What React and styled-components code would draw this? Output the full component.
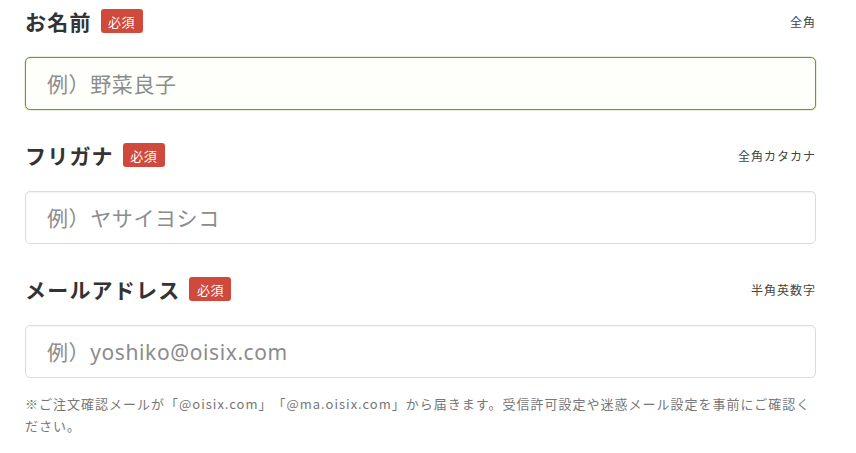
import React from "react";
import styled, { createGlobalStyle } from "styled-components";

const Global = createGlobalStyle`
  html, body { margin: 0; padding: 0; background: #fff; }
  body { font-family: "Noto Sans", "Noto Sans CJK JP", sans-serif; color: #333; }
  * { box-sizing: border-box; }
`;

const Form = styled.div`
  width: 856px;
  padding: 9px 40px 0 25px;
`;

const Field = styled.div`
  margin-bottom: 33px;
`;

const Header = styled.div`
  display: flex;
  align-items: center;
  height: 24px;
  margin-bottom: 24px;
`;

const Label = styled.span`
  font-family: "Noto Sans CJK JP", sans-serif;
  font-size: 21px;
  font-weight: 700;
  letter-spacing: 1.2px;
  color: #333;
  line-height: 24px;
`;

const Badge = styled.span`
  display: inline-flex;
  align-items: center;
  justify-content: center;
  height: 24px;
  width: 42px;
  margin-left: 9px;
  border-radius: 3px;
  background: #cf4a3d;
  color: #fff;
  font-family: "Noto Sans CJK JP", sans-serif;
  font-size: 13px;
  letter-spacing: 0.5px;
`;

const Hint = styled.span`
  margin-left: auto;
  font-family: "Noto Sans CJK JP", sans-serif;
  font-size: 12px;
  letter-spacing: 1px;
  color: #444;
`;

const Input = styled.input`
  display: block;
  width: 100%;
  height: 53px;
  padding: 0 21px;
  border: 1px solid ${(p) => (p.$active ? "#5fa318" : "#dcdcdc")};
  border-radius: 5px;
  background: ${(p) => (p.$active ? "#fefffa" : "#fff")};
  font-family: "Noto Sans", "Noto Sans CJK JP", sans-serif;
  font-size: 21px;
  letter-spacing: 0.6px;
  color: #333;
  outline: none;
  box-shadow: ${(p) =>
    p.$active ? "0 0 0 0.5px rgba(110,170,40,0.35)" : "inset 0 1px 2px rgba(0,0,0,0.05)"};
  &::placeholder { color: #8c8c8c; }
`;

const Note = styled.p`
  margin: -18px 0 0;
  font-family: "Noto Sans CJK JP", sans-serif;
  font-size: 13px;
  line-height: 22px;
  letter-spacing: 1px;
  text-spacing-trim: space-all;
  color: #777;
`;

const fields = [
  { label: "お名前", hint: "全角", placeholder: "例）野菜良子", active: true },
  { label: "フリガナ", hint: "全角カタカナ", placeholder: "例）ヤサイヨシコ" },
  { label: "メールアドレス", hint: "半角英数字", placeholder: "例）yoshiko@oisix.com" },
];

export default function App() {
  return (
    <>
      <Global />
      <Form>
        {fields.map((f) => (
          <Field key={f.label}>
            <Header>
              <Label>{f.label}</Label>
              <Badge>必須</Badge>
              <Hint>{f.hint}</Hint>
            </Header>
            <Input $active={f.active} placeholder={f.placeholder} readOnly />
          </Field>
        ))}
        <Note>
          ※ご注文確認メールが「@oisix.com」「@ma.oisix.com」から届きます。受信許可設定や迷惑メール設定を事前にご確認ください。
        </Note>
      </Form>
    </>
  );
}
